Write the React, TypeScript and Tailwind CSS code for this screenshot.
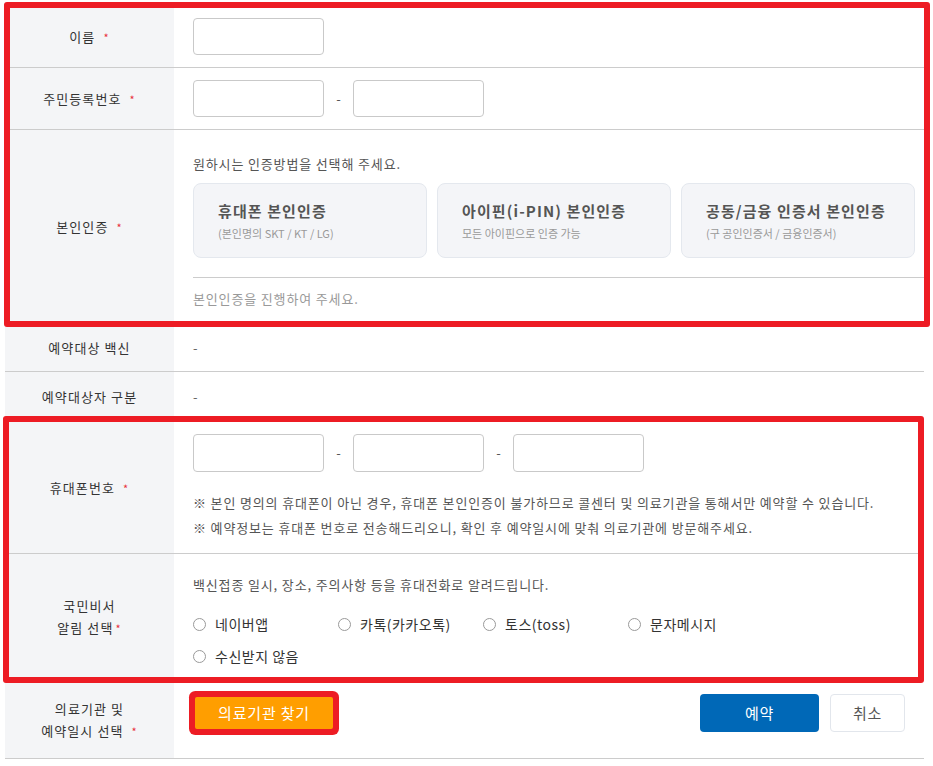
import type { ReactNode } from 'react';

const font = "font-['Noto_Sans_CJK_KR','Noto_Sans',sans-serif]";

function Label({ children, required, tight }: { children: ReactNode; required?: boolean; tight?: boolean }) {
  return (
    <div className="flex w-[169px] shrink-0 items-center justify-center bg-[#f4f5f7] text-center text-[13px] leading-[22px] tracking-[1.1px] text-[#333]">
      <div>
        {children}
        {required && (
          <span className={`${tight ? 'ml-[2px]' : 'ml-[8px]'} text-[11px] text-[#e8303a]`}>*</span>
        )}
      </div>
    </div>
  );
}

function Field({ className = '' }: { className?: string }) {
  return <div className={`h-[37px] w-[131px] rounded-[4px] border border-[#c9c9c9] bg-white ${className}`} />;
}

function Dash() {
  return <span className="w-[29px] text-center text-[13px] text-[#555]">-</span>;
}

function Radio({ label }: { label: string }) {
  return (
    <label className="flex h-[32px] w-[145px] items-center">
      <span className="h-[13px] w-[13px] rounded-full border border-[#9a9a9a] bg-white" />
      <span className="ml-[9px] text-[14px] tracking-[0.5px] text-[#333]">{label}</span>
    </label>
  );
}

function AuthCard({ title, sub }: { title: string; sub: string }) {
  return (
    <div className="flex h-[75px] w-[234px] flex-col justify-center rounded-[8px] border border-[#e4e8ee] bg-[#f4f5f8] pl-[24px]">
      <div className="text-[15px] font-semibold leading-[22px] tracking-[1.1px] text-[#555]">{title}</div>
      <div className="mt-[3px] text-[11px] leading-[16px] text-[#999]">{sub}</div>
    </div>
  );
}

function Annotation({ className }: { className: string }) {
  return <div className={`pointer-events-none absolute rounded-[3px] border-[6px] border-[#ed1c24] ${className}`} />;
}

export default function App() {
  return (
    <div className={`${font} min-h-[766px] bg-white pl-[5px] pt-[6px]`}>
      <div className="w-[919px]">
        <div className="relative">
          <div className="flex h-[62px] border-b border-[#cccccc]">
            <Label required>이름</Label>
            <div className="flex flex-1 items-center pl-[19px]">
              <Field />
            </div>
          </div>
          <div className="flex h-[62px] border-b border-[#cccccc]">
            <Label required>주민등록번호</Label>
            <div className="flex flex-1 items-center pl-[19px]">
              <Field />
              <Dash />
              <Field />
            </div>
          </div>
          <div className="flex h-[194px]">
            <Label required>본인인증</Label>
            <div className="flex-1 pl-[19px] pt-[24px]">
              <p className="text-[13px] leading-[19px] tracking-[0.85px] text-[#555]">원하시는 인증방법을 선택해 주세요.</p>
              <div className="mt-[10px] flex gap-[10px]">
                <AuthCard title="휴대폰 본인인증" sub="(본인명의 SKT / KT / LG)" />
                <AuthCard title="아이핀(i-PIN) 본인인증" sub="모든 아이핀으로 인증 가능" />
                <AuthCard title="공동/금융 인증서 본인인증" sub="(구 공인인증서 / 금융인증서)" />
              </div>
              <div className="mt-[19px] border-t border-[#cccccc]" />
              <p className="mt-[11px] text-[13px] leading-[19px] tracking-[0.85px] text-[#999]">본인인증을 진행하여 주세요.</p>
            </div>
          </div>
          <Annotation className="-bottom-[3px] -left-[1px] -right-[6px] -top-[4px]" />
        </div>

        <div className="flex h-[48px] border-b border-[#cccccc]">
          <Label>예약대상 백신</Label>
          <div className="flex flex-1 items-center pl-[19px] text-[13px] text-[#666]">-</div>
        </div>
        <div className="flex h-[50px]">
          <Label>예약대상자 구분</Label>
          <div className="flex flex-1 items-center pl-[19px] text-[13px] text-[#666]">-</div>
        </div>

        <div className="relative">
          <div className="flex h-[132px] border-b border-[#cccccc]">
            <Label required>휴대폰번호</Label>
            <div className="flex-1 pl-[19px] pt-[12px]">
              <div className="flex items-center">
                <Field className="h-[38px]" />
                <Dash />
                <Field className="h-[38px]" />
                <Dash />
                <Field className="h-[38px]" />
              </div>
              <div className="mt-[18px] text-[13px] leading-[25px] tracking-[0.85px] text-[#555]">
                <p>※ 본인 명의의 휴대폰이 아닌 경우, 휴대폰 본인인증이 불가하므로 콜센터 및 의료기관을 통해서만 예약할 수 있습니다.</p>
                <p>※ 예약정보는 휴대폰 번호로 전송해드리오니, 확인 후 예약일시에 맞춰 의료기관에 방문해주세요.</p>
              </div>
            </div>
          </div>
          <div className="flex h-[127px] border-b border-[#cccccc]">
            <Label required tight>
              국민비서
              <br />
              알림 선택
            </Label>
            <div className="flex-1 pl-[19px] pt-[21px]">
              <p className="text-[13px] leading-[19px] tracking-[0.85px] text-[#555]">백신접종 일시, 장소, 주의사항 등을 휴대전화로 알려드립니다.</p>
              <div className="mt-[14px] flex w-[600px] flex-wrap">
                <Radio label="네이버앱" />
                <Radio label="카톡(카카오톡)" />
                <Radio label="토스(toss)" />
                <Radio label="문자메시지" />
                <Radio label="수신받지 않음" />
              </div>
            </div>
          </div>
          <Annotation className="-bottom-[2px] -left-[2px] -top-[6px] right-0" />
        </div>

        <div className="flex h-[78px] border-b border-[#cccccc]">
          <Label required>
            의료기관 및
            <br />
            예약일시 선택
          </Label>
          <div className="flex flex-1 items-start justify-between pl-[21px] pr-[19px] pt-[13px]">
            <button
              type="button"
              className="mt-[3px] h-[32px] w-[138px] rounded-[2px] bg-[#ff9e00] text-[15px] tracking-[0.8px] text-white ring-[6px] ring-[#ed1c24]"
            >
              의료기관 찾기
            </button>
            <div className="flex gap-[11px]">
              <button type="button" className="h-[38px] w-[119px] rounded-[4px] bg-[#0068b7] text-[15px] tracking-[0.8px] text-white">
                예약
              </button>
              <button
                type="button"
                className="h-[38px] w-[75px] rounded-[4px] border border-[#e2e6ec] bg-white text-[15px] tracking-[0.8px] text-[#555]"
              >
                취소
              </button>
            </div>
          </div>
        </div>
      </div>
    </div>
  );
}
